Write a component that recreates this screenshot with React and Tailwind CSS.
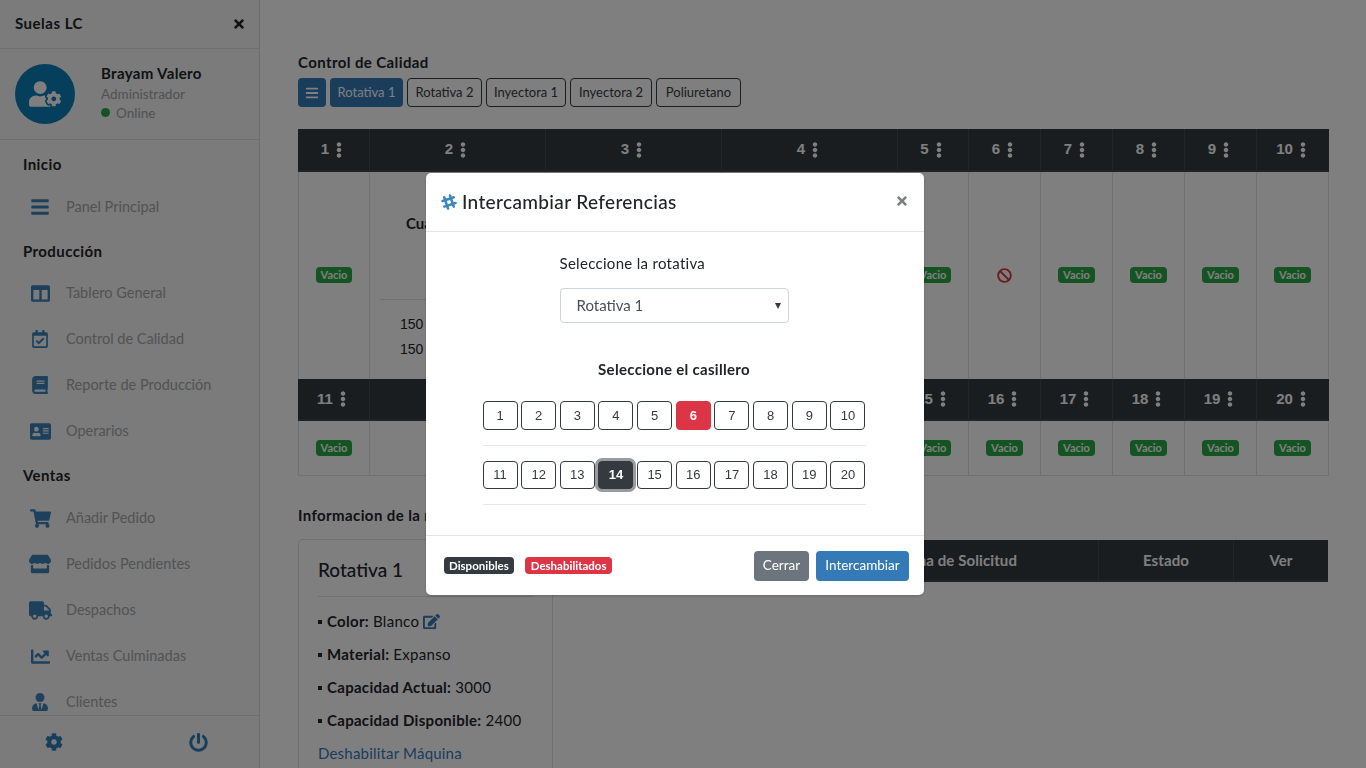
import React from "react";
import {
  FaBars, FaColumns, FaRegCalendarCheck, FaBook, FaAddressCard, FaShoppingCart, FaStore, FaTruck,
  FaChartLine, FaUserTie, FaCog, FaPowerOff, FaUserCog, FaTimes, FaEllipsisV, FaBan, FaEdit, FaSlackHash,
} from "react-icons/fa";

const FONT = "font-['Lato','Liberation_Sans',sans-serif]";
const NUM = "font-['Liberation_Sans',sans-serif]";

const nav = [
  { title: "Inicio", pad: "pt-[5px]", items: [["Panel Principal", FaBars, 20]] },
  { title: "Producción", pad: "pt-[4px]", items: [["Tablero General", FaColumns, 19], ["Control de Calidad", FaRegCalendarCheck, 18], ["Reporte de Producción", FaBook, 18], ["Operarios", FaAddressCard, 21]] },
  { title: "Ventas", pad: "pt-[5px]", items: [["Añadir Pedido", FaShoppingCart, 21], ["Pedidos Pendientes", FaStore, 22], ["Despachos", FaTruck, 23], ["Ventas Culminadas", FaChartLine, 19], ["Clientes", FaUserTie, 18]] },
];

function Sidebar() {
  return (
    <aside className="w-[260px] h-screen shrink-0 flex flex-col bg-[#f6f6f6] border-r border-[#d8d8d8]">
      <div className="h-[49px] shrink-0 flex items-center justify-between pl-[15px] pr-[13px] pb-[1px] border-b border-[#d8dce0]">
        <span className="text-[15px] font-bold tracking-[0.5px] text-[#212529]">Suelas LC</span>
        <FaTimes className="text-[#212529] text-[14px]" />
      </div>
      <div className="h-[91px] shrink-0 flex items-center pl-[15px] border-b border-[#d8dce0]">
        <div className="w-[60px] h-[60px] rounded-full bg-[#0a7fb8] flex items-center justify-center text-white">
          <FaUserCog className="text-[32px]" />
        </div>
        <div className="ml-[26px] mb-[4px] flex flex-col">
          <span className="text-[15px] font-bold leading-[21px] tracking-[0.35px] text-[#212529]">Brayam Valero</span>
          <span className="text-[13.5px] leading-[20px] text-[#a0a4a8]">Administrador</span>
          <span className="text-[13.5px] leading-[18px] text-[#a0a4a8] flex items-center">
            <span className="w-[9px] h-[9px] rounded-full bg-[#28a745] mr-[6px]" />Online
          </span>
        </div>
      </div>
      <div className="flex-1 overflow-hidden">
        <nav className="pt-[1px]">
          {nav.map((s, si) => (
            <div key={s.title}>
              <div className={"flex items-end pl-[23px] text-[15px] font-bold leading-[30px] tracking-[0.4px] text-[#212529] " + (si === 0 ? "h-[38px]" : "h-[36px]")}>{s.title}</div>
              <div className={s.pad}>
                {s.items.map(([label, Icon, size]) => (
                  <div key={label} className="h-[46px] flex items-center">
                    <span className="w-[66px] flex justify-center pl-[14px] text-[#3a82ba] shrink-0">
                      <Icon size={size} />
                    </span>
                    <span className="text-[14.5px] text-[#a4a6a8]">{label}</span>
                  </div>
                ))}
              </div>
            </div>
          ))}
        </nav>
      </div>
      <div className="h-[53px] shrink-0 border-t border-[#d8dce0] flex items-center justify-between pl-[45px] pr-[51px] text-[#2f7fb8]">
        <FaCog size={18} />
        <FaPowerOff size={19} />
      </div>
    </aside>
  );
}

function HeadCell({ n, last, h }) {
  return (
    <div className={h + " bg-[#343a40] border-b-2 border-b-[#3f464d] flex items-center justify-center pr-[4px] text-white font-bold text-[15px] gap-[7px] " + (last ? "" : "border-r border-r-[#454d55]")}>
      <span className={NUM}>{n}</span>
      <FaEllipsisV className="w-[6px] h-[16px]" />
    </div>
  );
}

function Vacio() {
  return <span className="inline-block bg-[#28a745] rounded-[4px] px-[5px] text-white text-[11px] font-bold leading-[16px]">Vacio</span>;
}

function BodyCell({ col, h, ban, lastRowBorder }) {
  return (
    <div className={h + " flex items-center justify-center pb-[1px] border-r border-[#dee2e6] " + (col === 0 ? "border-l " : "") + (lastRowBorder ? "border-b" : "")}>
      {ban ? <FaBan className="text-[#dc3545]" size={15} /> : <Vacio />}
    </div>
  );
}

function WideBlock() {
  return (
    <div className="h-[207px] border-r border-[#dee2e6] flex flex-col px-[10px] text-[#212529]">
      <div className="h-[128px] flex items-center justify-start pl-[26px] pb-[24px] border-b border-[#dee2e6] text-[15px] font-bold">Cuadrantes</div>
      <div className={"pl-[20px] pt-[12px] text-[14px] leading-[25px] " + NUM}>
        <div>150</div>
        <div>150</div>
      </div>
    </div>
  );
}

const GRID = "grid grid-cols-[72px_176px_176px_176px_71px_72px_72px_72px_72px_72px]";

function Tablero() {
  const top = [1, 2, 3, 4, 5, 6, 7, 8, 9, 10];
  const bottom = [11, 12, 13, 14, 15, 16, 17, 18, 19, 20];
  return (
    <div className="mt-[22px] w-[1031px]">
      <div className={GRID}>
        {top.map((n, i) => <HeadCell key={n} n={n} h="h-[43px]" last={i === 9} />)}
        {top.map((n, i) =>
          i >= 1 && i <= 3 ? <WideBlock key={n} /> : <BodyCell key={n} col={i} h="h-[207px]" ban={n === 6} />
        )}
        {bottom.map((n, i) => <HeadCell key={n} n={n} h="h-[42px]" last={i === 9} />)}
        {bottom.map((n, i) => <BodyCell key={n} col={i} h="h-[55px]" lastRowBorder />)}
      </div>
    </div>
  );
}

function Row({ label, children }) {
  return (
    <div className="h-[33px] flex items-center text-[15px] tracking-[0.3px] text-[#212529] whitespace-nowrap">
      <span className="w-[4px] h-[4px] bg-[#212529] mr-[5px]" />
      <b className="font-bold mr-[4px]">{label}</b>
      {children}
    </div>
  );
}

function Main() {
  const tabs = [["Rotativa 2", "w-[75px]"], ["Inyectora 1", "w-[80px]"], ["Inyectora 2", "w-[82px]"], ["Poliuretano", "w-[85px]"]];
  return (
    <main className="flex-1 h-screen overflow-hidden pl-[38px] pt-[52px] bg-white">
      <div className="text-[15px] font-bold leading-[20px] tracking-[0.4px] text-[#212529]">Control de Calidad</div>
      <div className="mt-[6px] flex items-center gap-[4px] h-[29px]">
        <div className="w-[28px] h-[29px] rounded-[4px] bg-[#337ab7] text-white flex items-center justify-center"><FaBars size={14} /></div>
        <div className="w-[73px] h-[29px] rounded-[4px] bg-[#337ab7] text-white flex items-center justify-center text-[13px]">Rotativa 1</div>
        {tabs.map(([t, w]) => (
          <div key={t} className={w + " h-[29px] rounded-[4px] border border-[#343a40] text-[#343a40] flex items-center justify-center text-[13px]"}>{t}</div>
        ))}
      </div>
      <Tablero />
      <div className="mt-[29px] text-[15px] font-bold leading-[20px] tracking-[0.4px] text-[#212529]">Informacion de la rotativa</div>
      <div className="mt-[15px] flex items-start">
        <div className="w-[255px] shrink-0 -mt-[1px] border border-[#dee2e6] rounded-[4px] px-[19px] pt-[16px] h-[300px]">
          <div className="text-[19px] font-medium leading-[28px] text-[#212529] pb-[12px] border-b border-[#dee2e6]">Rotativa 1</div>
          <div className="mt-[8px]">
            <Row label="Color:">Blanco<FaEdit className="ml-[4px] text-[#337ab7]" size={17} /></Row>
            <Row label="Material:">Expanso</Row>
            <Row label="Capacidad Actual:">3000</Row>
            <Row label="Capacidad Disponible:">2400</Row>
            <div className="h-[33px] flex items-center text-[15px] tracking-[0.2px] text-[#337ab7]">Deshabilitar Máquina</div>
          </div>
        </div>
        <div className="w-[775px] h-[42px] bg-[#343a40] border-b-2 border-b-[#3f464d] flex text-white font-bold text-[15px] tracking-[0.1px]">
          <div className="w-[546px] border-r border-[#454d55] flex items-center justify-end pr-[81px]">Fecha de Solicitud</div>
          <div className="w-[135px] border-r border-[#454d55] flex items-center justify-center">Estado</div>
          <div className="flex-1 flex items-center justify-center">Ver</div>
        </div>
      </div>
    </main>
  );
}

function Box({ n, state }) {
  const base = "w-[35px] rounded-[4px] flex items-center justify-center text-[13px] " + NUM + " ";
  if (state === "red") return <div className={base + "h-[29px] bg-[#dc3545] border border-[#dc3545] text-white font-bold"}>{n}</div>;
  if (state === "dark") return <div className={base + "h-[28px] bg-[#343a40] border border-[#343a40] text-white font-bold ring-[3px] ring-[#343a40]/50"}>{n}</div>;
  return <div className={base + "border border-[#343a40] text-[#343a40] " + (n > 10 ? "h-[28px]" : "h-[29px]")}>{n}</div>;
}

function Modal() {
  const a = [1, 2, 3, 4, 5, 6, 7, 8, 9, 10];
  const b = [11, 12, 13, 14, 15, 16, 17, 18, 19, 20];
  return (
    <div className="fixed inset-0 bg-black/50 flex items-start justify-center pt-[173px] pr-[16px]">
      <div className="w-[498px] h-[422px] bg-white rounded-[5px] flex flex-col shadow-[0_1px_3px_rgba(0,0,0,0.2)]">
        <div className="h-[59px] shrink-0 border-b border-[#e2e5e8] flex items-center justify-between pl-[14px] pr-[15px]">
          <div className="flex items-center gap-[4px] text-[19px] font-medium tracking-[0.35px] text-[#212529]">
            <FaSlackHash className="text-[#3a86c0]" size={18} />
            <span>Intercambiar Referencias</span>
          </div>
          <FaTimes className="text-[#7c7f82] mb-[3px]" size={14} />
        </div>
        <div className="flex-1 flex flex-col items-center pr-[2px]">
          <div className="w-[229px] mt-[20px] text-[15px] leading-[22px] tracking-[0.3px] text-[#212529]">Seleccione la rotativa</div>
          <div className="w-[229px] h-[35px] mt-[14px] border border-[#ced4da] rounded-[4px] flex items-center justify-between pl-[16px] pr-[7px] text-[15px] text-[#495057]">
            <span>Rotativa 1</span>
            <span className="w-0 h-0 border-x-[3.5px] border-x-transparent border-t-[6px] border-t-[#343a40]" />
          </div>
          <div className="mt-[35px] text-[15px] leading-[22px] font-bold tracking-[0.3px] text-[#212529]">Seleccione el casillero</div>
          <div className="w-[383px] mt-[21px] flex justify-between">
            {a.map((n) => <Box key={n} n={n} state={n === 6 ? "red" : null} />)}
          </div>
          <div className="w-[383px] h-px mt-[15px] bg-[#e6e8ea]" />
          <div className="w-[383px] mt-[15px] flex justify-between">
            {b.map((n) => <Box key={n} n={n} state={n === 14 ? "dark" : null} />)}
          </div>
          <div className="w-[383px] h-px mt-[15px] bg-[#e6e8ea]" />
        </div>
        <div className="h-[60px] shrink-0 border-t border-[#e2e5e8] flex items-center pl-[18px] pr-[15px]">
          <span className="bg-[#343a40] rounded-[4px] px-[5px] text-white text-[11.5px] font-bold leading-[17px]">Disponibles</span>
          <span className="ml-[11px] bg-[#dc3545] rounded-[4px] px-[6px] text-white text-[11.5px] font-bold leading-[17px]">Deshabilitados</span>
          <div className="ml-auto flex gap-[7px]">
            <div className="w-[55px] h-[30px] rounded-[4px] bg-[#6c757d] text-white flex items-center justify-center text-[13.5px]">Cerrar</div>
            <div className="w-[93px] h-[30px] rounded-[4px] bg-[#337ab7] text-white flex items-center justify-center text-[13.5px]">Intercambiar</div>
          </div>
        </div>
      </div>
    </div>
  );
}

export default function App() {
  return (
    <div className={"h-screen w-full overflow-hidden flex relative " + FONT}>
      <Sidebar />
      <Main />
      <Modal />
    </div>
  );
}
